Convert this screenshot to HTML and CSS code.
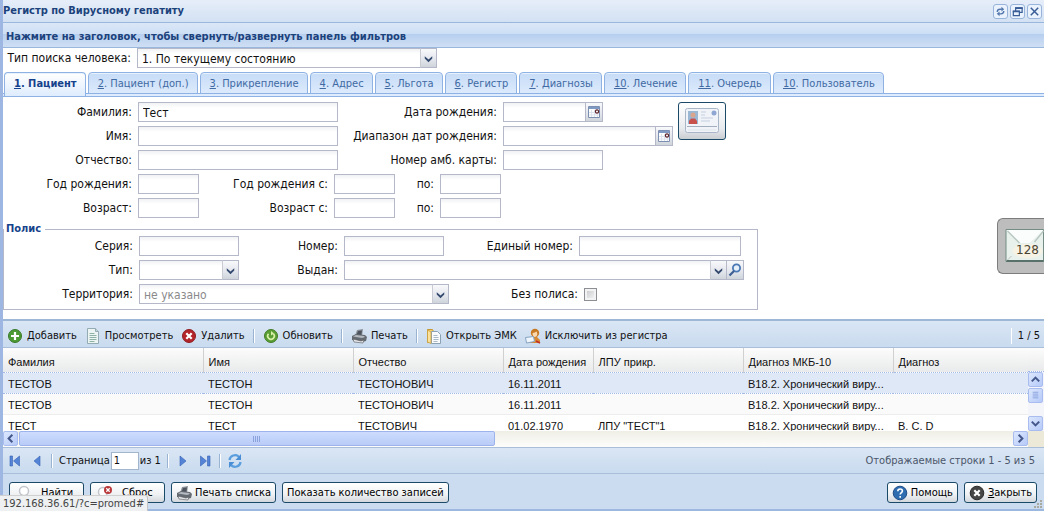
FILE: index.html
```html
<!DOCTYPE html>
<html lang="ru">
<head>
<meta charset="utf-8">
<title>Регистр по Вирусному гепатиту</title>
<link rel="stylesheet" href="styles.css">
</head>
<body>
<svg class="defs" aria-hidden="true">
  <symbol id="chevron" viewBox="0 0 16 18"><path d="M4 7l4 3.500 4-3.500v2.500l-4 4-4-4z" fill="#33496e"/></symbol>
  <symbol id="calendar" viewBox="0 0 16 18"><path d="M2.500 3.500h11v11h-11z" fill="#fff" stroke="#7d8fb0"/><path d="M3 4h10v2H3z" fill="#7f9ac4"/><path d="M5.500 7v7M8.500 7v7M11.500 11v3M3 9.500h6M3 12h10" stroke="#dde3ee"/><circle cx="11" cy="8.500" r="1.600" fill="#fff" stroke="#5a2028" stroke-width="1.200"/></symbol>
  <symbol id="printer" viewBox="0 0 16 16"><path d="M6 2l6-1-1 7H4z" fill="#8d939b"/><path d="M7 3l4-.5-.7 4.500H5.500z" fill="#4d545e"/><path d="M1 8l4-2 9 1 2 2-1 4-4 1-10-2z" fill="#656b73"/><path d="M2 8.500l3-1.500 8 1 1 1-3 1z" fill="#b5bac0"/><path d="M2 11l8 2 3-1-1 3-9-1z" fill="#e4e8ed" stroke="#555" stroke-width=".6"/></symbol>
</svg>
<div class="window">
  <header class="titlebar">
    <h1 class="title">Регистр по Вирусному гепатиту</h1>
    <div class="tools">
      <button class="tool" aria-label="Обновить окно"><svg viewBox="0 0 14 14"><path d="M3.500 7.500c0-2 1-3 3-3h2M10.500 6.500c0 2-1 3-3 3h-2" fill="none" stroke="#5377ac" stroke-width="1.500"/><path d="M8 2l3 2.500L8 7zM6 7L3 9.500 6 12z" fill="#5377ac"/></svg></button>
      <button class="tool" aria-label="Свернуть в окно"><svg viewBox="0 0 14 14"><path d="M5 6V3h7v5H9.500M2.500 6.700h6.500v4.800H2.500z" fill="none" stroke="#395d97" stroke-width="1.300"/><path d="M4.500 3.300h8M2 7h7.500" stroke="#395d97" stroke-width="1.800"/></svg></button>
      <button class="tool" aria-label="Закрыть окно"><svg viewBox="0 0 14 14"><path d="M3 3l8 8M11 3l-8 8" stroke="#395d97" stroke-width="1.600"/></svg></button>
    </div>
  </header>
  <h2 class="filter-head">Нажмите на заголовок, чтобы свернуть/развернуть панель фильтров</h2>

  <form class="filters">
    <div class="row search-type">
      <label for="stype">Тип поиска человека:</label>
      <span class="combo w300"><select id="stype"><option>1. По текущему состоянию</option></select><svg class="trigger"><use href="#chevron"/></svg></span>
    </div>
    <nav class="tabs">
      <a class="tab active" href="#p1"><u>1</u>. Пациент</a>
      <a class="tab" href="#p2"><u>2</u>. Пациент (доп.)</a>
      <a class="tab" href="#p3"><u>3</u>. Прикрепление</a>
      <a class="tab" href="#p4"><u>4</u>. Адрес</a>
      <a class="tab" href="#p5"><u>5</u>. Льгота</a>
      <a class="tab" href="#p6"><u>6</u>. Регистр</a>
      <a class="tab" href="#p7"><u>7</u>. Диагнозы</a>
      <a class="tab" href="#p8"><u>10</u>. Лечение</a>
      <a class="tab" href="#p9"><u>11</u>. Очередь</a>
      <a class="tab" href="#p10"><u>10</u>. Пользователь</a>
    </nav>
    <div class="patient" id="p1">
      <div class="rows">
        <div class="row"><label class="l1" for="fam">Фамилия:</label><input class="w200" id="fam" value="Тест"><label class="l2" for="bd">Дата рождения:</label><input class="w83" id="bd"><button type="button" class="trigger" aria-label="Календарь"><svg><use href="#calendar"/></svg></button></div>
        <div class="row"><label class="l1" for="im">Имя:</label><input class="w200" id="im"><label class="l2" for="bdr">Диапазон дат рождения:</label><input class="w153" id="bdr"><button type="button" class="trigger" aria-label="Календарь"><svg><use href="#calendar"/></svg></button></div>
        <div class="row"><label class="l1" for="ot">Отчество:</label><input class="w200" id="ot"><label class="l2" for="amb">Номер амб. карты:</label><input class="w100" id="amb"></div>
        <div class="row"><label class="l1" for="gr">Год рождения:</label><input class="w60" id="gr"><label class="l3" for="gr1">Год рождения с:</label><input class="w60" id="gr1"><label class="l4" for="gr2">по:</label><input class="w60" id="gr2"></div>
        <div class="row"><label class="l1" for="vo">Возраст:</label><input class="w60" id="vo"><label class="l3" for="vo1">Возраст с:</label><input class="w60" id="vo1"><label class="l4" for="vo2">по:</label><input class="w60" id="vo2"></div>
      </div>
      <button type="button" class="card-btn" aria-label="Считать карту"><svg viewBox="0 0 34 26"><rect x=".5" y=".5" width="33" height="24" rx="2" fill="#f0f4f9" stroke="#a9b6c8"/><rect x="3" y="3" width="10" height="13" fill="#9ab7d4"/><circle cx="8" cy="7" r="2.500" fill="#d9a58c"/><path d="M4 16v-3l2-2.500h4l2 2.500v3z" fill="#c9514c"/><path d="M16 4h5M16 7h4M16 10h12M16 13h9" stroke="#c6cfde"/><circle cx="29" cy="5" r="2.500" fill="#8fa6d2"/><path d="M2 18.500h30" stroke="#a3afbf"/><path d="M3 22h28" stroke="#dfe5ec"/></svg></button>
    </div>
    <fieldset class="policy">
      <legend>Полис</legend>
      <div class="row"><label class="l5" for="ser">Серия:</label><input class="w100" id="ser"><label class="l6" for="num">Номер:</label><input class="w100" id="num"><label class="l7" for="en">Единый номер:</label><input class="w162" id="en"></div>
      <div class="row"><label class="l5" for="tip">Тип:</label><span class="combo w100"><select id="tip"><option></option></select><svg class="trigger"><use href="#chevron"/></svg></span><label class="l6" for="vyd">Выдан:</label><span class="combo w383"><select id="vyd"><option></option></select><svg class="trigger"><use href="#chevron"/></svg></span><button type="button" class="trigger" aria-label="Найти"><svg viewBox="0 0 16 18"><circle cx="9.500" cy="7" r="3.600" fill="#e6f0fb" stroke="#4a78b4" stroke-width="1.800"/><path d="M7 10l-4.500 4.500" stroke="#3b5d92" stroke-width="2.200"/></svg></button></div>
      <div class="row"><label class="l5" for="ter">Территория:</label><span class="combo w310"><select class="muted" id="ter"><option>не указано</option></select><svg class="trigger"><use href="#chevron"/></svg></span><label class="l8" for="bez">Без полиса:</label><input type="checkbox" id="bez"></div>
    </fieldset>
  </form>

  <div class="toolbar">
    <button class="tb"><svg viewBox="0 0 16 16"><circle cx="8" cy="8" r="6.500" fill="#4c9a32" stroke="#3a7a2c"/><path d="M8 4v8M4 8h8" stroke="#fff" stroke-width="2.200"/></svg>Добавить</button>
    <button class="tb"><svg viewBox="0 0 16 16"><path d="M2.500 .5h8l3 3v12h-11z" fill="#edf5f4" stroke="#93abb3"/><path d="M10.500 .5v3h3" fill="#c6d6da" stroke="#93abb3"/><path d="M4.500 5.500h5M4.500 7.500h7M4.500 9.500h7M4.500 11.500h7M4.500 13.500h5" stroke="#8fb2a6"/></svg>Просмотреть</button>
    <button class="tb"><svg viewBox="0 0 16 16"><circle cx="8" cy="8" r="6.500" fill="#b3242a" stroke="#8e1e22"/><path d="M5.300 5.300l5.400 5.400M10.700 5.300l-5.400 5.400" stroke="#fff" stroke-width="2.200"/></svg>Удалить</button>
    <span class="sep"></span>
    <button class="tb"><svg viewBox="0 0 16 16"><circle cx="8" cy="8" r="6.500" fill="#5a9e34" stroke="#447c28"/><path d="M5.500 5.800a3.300 3.300 0 1 0 5 0" fill="none" stroke="#d9f0a8" stroke-width="1.600"/><path d="M8 3l3 2.500-3 2z" fill="#d9f0a8"/></svg>Обновить</button>
    <span class="sep"></span>
    <button class="tb"><svg><use href="#printer"/></svg>Печать</button>
    <span class="sep"></span>
    <button class="tb"><svg viewBox="0 0 16 16"><path d="M1.500 1.500h5l1 2v11h-6z" fill="#f3cf6a" stroke="#c59a36"/><path d="M5.500 3.500h6l3 3v9h-9z" fill="#f8fafb" stroke="#8aa2b4"/><path d="M7.500 7.500h4M7.500 9.500h5M7.500 11.500h5M7.500 13.500h4" stroke="#a8bac6"/><path d="M1.500 2l3.500 2v11.500l-3.500-1.500z" fill="#fbe19a" stroke="#c59a36" stroke-width=".7"/></svg>Открыть ЭМК</button>
    <button class="tb"><svg viewBox="0 0 16 16"><path d="M4 15l1-4 3-2h4l3 3v3z" fill="#d98a32"/><circle cx="10" cy="5" r="4.200" fill="#c77a23"/><path d="M7.500 5c2 0 3-.8 3.800-1.500.8.800 1 1.500 1 2.500 0 2-1.300 3-2.500 3s-2.300-1.500-2.300-4z" fill="#fbd9ae"/><path d="M.5 9.500l8-1 1 5-8 1.500z" fill="#eef5fb" stroke="#86a4c2"/><path d="M11 13l4 2" stroke="#c03028" stroke-width="1.500"/></svg>Исключить из регистра</button>
    <span class="counter">1 / 5</span>
  </div>

  <div class="grid">
    <table class="list">
      <colgroup><col class="c200"><col class="c150"><col class="c150"><col class="c90"><col class="c150"><col class="c150"><col></colgroup>
      <thead><tr><th>Фамилия</th><th>Имя</th><th>Отчество</th><th>Дата рождения</th><th>ЛПУ прикр.</th><th>Диагноз МКБ-10</th><th>Диагноз</th></tr></thead>
      <tbody>
        <tr class="selected"><td>ТЕСТОВ</td><td>ТЕСТОН</td><td>ТЕСТОНОВИЧ</td><td>16.11.2011</td><td></td><td>B18.2. Хронический виру...</td><td></td></tr>
        <tr class="alt"><td>ТЕСТОВ</td><td>ТЕСТОН</td><td>ТЕСТОНОВИЧ</td><td>16.11.2011</td><td></td><td>B18.2. Хронический виру...</td><td></td></tr>
        <tr><td>ТЕСТ</td><td>ТЕСТ</td><td>ТЕСТОВИЧ</td><td>01.02.1970</td><td>ЛПУ "ТЕСТ"1</td><td>B18.2. Хронический виру...</td><td>B. C. D</td></tr>
      </tbody>
    </table>
    <div class="head-end"></div>
    <div class="vscroll">
      <button class="sb" aria-label="Вверх"><svg viewBox="0 0 14 14"><path d="M3 9l4-4 4 4" fill="none" stroke="#43578a" stroke-width="2.200"/></svg></button>
      <span class="sb"><svg viewBox="0 0 14 14"><path d="M4 3.500h6M4 5.500h6M4 7.500h6M4 9.500h6" stroke="#8ba3dc"/></svg></span>
      <button class="sb last" aria-label="Вниз"><svg viewBox="0 0 14 14"><path d="M3 5l4 4 4-4" fill="none" stroke="#43578a" stroke-width="2.200"/></svg></button>
    </div>
    <div class="hscroll">
      <button class="sb" aria-label="Влево"><svg viewBox="0 0 14 14"><path d="M9 3L5 7l4 4" fill="none" stroke="#43578a" stroke-width="2.200"/></svg></button>
      <span class="thumb"><svg viewBox="0 0 8 8"><path d="M.5 1v6M2.500 1v6M4.500 1v6M6.500 1v6" stroke="#8ba3dc"/></svg></span>
      <button class="sb last" aria-label="Вправо"><svg viewBox="0 0 14 14"><path d="M5 3l4 4-4 4" fill="none" stroke="#43578a" stroke-width="2.200"/></svg></button>
    </div>
    <div class="corner"></div>
  </div>

  <div class="pager">
    <button class="pg" aria-label="Первая"><svg viewBox="0 0 16 16"><path d="M3 3h2.500v10H3zM12.500 3v10L6.500 8z" fill="#5584d6" stroke="#3562b4" stroke-width=".6"/></svg></button>
    <button class="pg" aria-label="Предыдущая"><svg viewBox="0 0 16 16"><path d="M11 3v10L5 8z" fill="#5584d6" stroke="#3562b4" stroke-width=".6"/></svg></button>
    <span class="sep"></span>
    <span class="page-box"><label for="page">Страница</label><input id="page" class="page" value="1"><span>из 1</span></span>
    <span class="sep"></span>
    <button class="pg" aria-label="Следующая"><svg viewBox="0 0 16 16"><path d="M5 3v10l6-5z" fill="#5584d6" stroke="#3562b4" stroke-width=".6"/></svg></button>
    <button class="pg" aria-label="Последняя"><svg viewBox="0 0 16 16"><path d="M3.500 3v10l6-5zM10.500 3H13v10h-2.500z" fill="#5584d6" stroke="#3562b4" stroke-width=".6"/></svg></button>
    <span class="sep"></span>
    <button class="pg" aria-label="Обновить"><svg viewBox="0 0 16 16"><path d="M2.500 7a5.500 5.500 0 0 1 9.500-3M13.500 9A5.500 5.500 0 0 1 4 12" fill="none" stroke="#5a9ede" stroke-width="2.300"/><path d="M14 1v6H8.500zM2 15V9h5.500z" fill="#4a8fd6"/></svg></button>
    <span class="info">Отображаемые строки 1 - 5 из 5</span>
  </div>

  <footer class="footer">
    <button class="btn w75"><svg viewBox="0 0 16 16"><circle cx="8" cy="6" r="4.500" fill="#fff" stroke="#c2c6cc" stroke-width="1.500"/></svg>Найти</button>
    <button class="btn w75"><svg viewBox="0 0 16 16"><circle cx="6" cy="7" r="4.500" fill="#fff" stroke="#c2c6cc" stroke-width="1.500"/><circle cx="11" cy="5" r="4" fill="#b9383a"/><path d="M9.300 3.300l3.400 3.400M12.700 3.300L9.300 6.700" stroke="#fff" stroke-width="1.300"/></svg>Сброс</button>
    <button class="btn"><svg><use href="#printer"/></svg>Печать списка</button>
    <button class="btn">Показать количество записей</button>
    <button class="btn right"><svg viewBox="0 0 16 16"><circle cx="8" cy="8" r="6.800" fill="#2f6db0" stroke="#1f4d88"/><path d="M5.800 6.300c0-3 4.600-3 4.600-.3 0 1.600-2.200 1.700-2.200 3.600M8.200 11v1.700" fill="none" stroke="#fff" stroke-width="1.600"/></svg>Помощь</button>
    <button class="btn"><svg viewBox="0 0 16 16"><circle cx="8" cy="8" r="6.800" fill="#454545" stroke="#2b2b2b"/><path d="M5.300 5.300l5.400 5.400M10.700 5.300l-5.400 5.400" stroke="#fff" stroke-width="2.200"/></svg><span><u>З</u>акрыть</span></button>
  </footer>
  <svg class="grip" viewBox="0 0 12 12" aria-hidden="true"><path d="M8 1h2v2H8zM5 4h2v2H5zM8 4h2v2H8zM2 7h2v2H2zM5 7h2v2H5zM8 7h2v2H8z" fill="#a9a9a0"/></svg>
</div>
<button class="mail" aria-label="Сообщения"><svg viewBox="0 0 38 34"><path d="M.5 .5H38v32H.5z" fill="#e9f1ed" stroke="#738c85"/><path d="M1 1l14 13h9L38 1z" fill="#fafdfb"/><path d="M2 2l12 12M38 2L29 13" fill="none" stroke="#b8c6c1" stroke-width="1.400"/><ellipse cx="22" cy="22" rx="15" ry="7" fill="#f6f3e4"/><path d="M2 31l4-4" stroke="#b8c6c1"/><path d="M1 32h37" stroke="#58726b" stroke-width="2"/></svg><span>128</span></button>
<div class="status">192.168.36.61/?c=promed#</div>
</body>
</html>
```
FILE: styles.css
```css
* { box-sizing: border-box; }
html, body { height: 100%; }
body {
  margin: 0;
  overflow: hidden;
  position: relative;
  font: 12px/16px "DejaVu Sans Condensed", "DejaVu Sans", sans-serif;
  color: #111;
}
button, input, select { font: inherit; color: inherit; margin: 0; padding: 0; border-radius: 0; }
button { background: none; border: 0; display: inline-flex; align-items: center; white-space: nowrap; }
.defs { display: none; }
label, .tab, th, .info { white-space: nowrap; }

.window {
  height: 100%;
  display: flex;
  flex-direction: column;
  background: #cbdcf1;
  border-left: 3px solid #9db6e2;
  border-bottom: 2px solid #9db8df;
}
.titlebar {
  display: flex;
  justify-content: space-between;
  align-items: center;
  height: 23px;
  padding: 0 2px 0 0;
  background: linear-gradient(#e6eef9, #d3e1f3);
  border-bottom: 1px solid #99b6dc;
}
.title, .filter-head { margin: 0; font-size: 11px; line-height: 16px; font-weight: bold; color: #1c427c; }
.tools { display: flex; gap: 2px; }
.tool { width: 15px; height: 15px; border: 1px solid #98b4da; border-radius: 3px; background: #e9f2fd; }
.tool svg { width: 13px; height: 13px; }
.filter-head {
  height: 25px;
  padding: 6px 3px 0;
  background: linear-gradient(#dbe7f7 0, #cddff5 45%, #b6cfef 46%, #cfdff3 100%);
  border-bottom: 1px solid #99b6dc;
}

.filters { background: #fff; padding-bottom: 9px; border-bottom: 2px solid #9db8d6; }
.row { display: flex; align-items: center; height: 20px; }
.search-type { padding-left: 3px; gap: 6px; margin-bottom: 4px; }
.search-type label { width: 125px; }
.row input:not([type="checkbox"]), select {
  height: 20px;
  border: 1px solid #b5b8c8;
  background: linear-gradient(#f1f2f4, #fff 5px);
  padding: 1px 4px 0;
  appearance: none;
}
select.muted { color: #8a8a8a; }
.combo { display: grid; }
.combo > * { grid-area: 1 / 1; }
.combo select { width: 100%; }
.trigger {
  width: 17px;
  height: 20px;
  border: 1px solid #b5b8c8;
  border-left-color: #c8cbd4;
  background: linear-gradient(#f8f9fb, #e2e5ec 60%, #cfd3da);
}
.combo .trigger { justify-self: end; pointer-events: none; }
.row button.trigger { border-left: 0; }
.trigger svg { width: 16px; height: 18px; }
.row label { text-align: right; }
.l1 { width: 129px; margin-right: 6px; }
.l2 { width: 159px; margin-right: 6px; }
.l3 { width: 129px; margin-right: 6px; }
.l4 { width: 39px; margin-right: 6px; }
.l5 { width: 129px; margin-right: 6px; }
.l6 { width: 99px; margin-right: 6px; }
.l7 { width: 129px; margin-right: 6px; }
.l8 { width: 129px; margin-right: 6px; }
.w60 { width: 61px; }
.w83 { width: 83px; }
.w100 { width: 100px; }
.w153 { width: 153px; }
.w162 { width: 162px; }
.w200 { width: 200px; }
.w300 { width: 300px; }
.w310 { width: 310px; }
.w383 { width: 383px; }
input[type="checkbox"] { appearance: none; width: 13px; height: 13px; border: 1px solid #8c8f94; background: linear-gradient(135deg, #c3c5c8, #fafafa); box-shadow: inset 0 0 0 2px #f3f3f3; }

.tabs { display: flex; gap: 2px; padding-left: 1px; height: 25px; align-items: flex-start; background: linear-gradient(#fff 21px, #8db2e3 21px 22px, #deecfd 22px 24px, #8db2e3 24px); }
.tab {
  height: 22px;
  padding: 3px 8px 0 9px;
  border: 1px solid #8db2e3;
  border-radius: 4px 4px 0 0;
  background: linear-gradient(#c7dcf7, #dceafc);
  box-shadow: inset 0 1px 0 #e8f2fd;
  color: #416aa3;
  font-size: 11px;
  text-decoration: none;
}
.tab.active { height: 24px; border-bottom: 0; background: linear-gradient(#fff, #deecfd); color: #15428b; font-weight: bold; }
.patient { display: flex; gap: 5px; padding-top: 5px; }
.rows { display: flex; flex-direction: column; gap: 4px; }
.card-btn { width: 48px; height: 38px; justify-content: center; border: 1px solid #1b4a68; border-radius: 3px; background: linear-gradient(#fff, #e8ebee 70%, #c9ced3); }
.card-btn svg { width: 34px; height: 26px; }
.policy { width: 755px; margin: 4px 0 0; padding: 0 0 5px; border: 1px solid #b5b8c8; display: grid; gap: 4px; }
.policy legend { padding: 0 4px 0 2px; font-size: 11px; line-height: 14px; font-weight: bold; color: #15428b; }

.toolbar, .pager {
  display: flex;
  align-items: center;
  height: 27px;
  font-size: 11px;
  background: linear-gradient(#dae6f4, #c9dbef);
  border-bottom: 1px solid #a9bfd9;
}
.toolbar { padding: 4px 4px 0; gap: 8px; }
.tb { gap: 4px; }
.tb svg, .btn svg { width: 16px; height: 16px; }
.sep { width: 2px; height: 14px; border-left: 1px solid #98b4d2; border-right: 1px solid #fff; }
.counter { margin-left: auto; padding-left: 6px; border-left: 1px solid #fff; }

.grid {
  flex: 1;
  min-height: 0;
  display: grid;
  grid-template-columns: minmax(0, 1fr) 16px;
  grid-template-rows: 24px minmax(0, 1fr) 16px;
  overflow: hidden;
  background: #fff;
  font: 11px/14px "Liberation Sans", Arial, sans-serif;
}
.list { grid-area: 1 / 1 / 3 / 2; width: 100%; border-collapse: collapse; table-layout: fixed; }
.c90 { width: 90px; }
.c150 { width: 150px; }
.c200 { width: 200px; }
.list th, .list td { padding: 2px 5px 0; text-align: left; font-weight: normal; overflow: hidden; white-space: nowrap; }
.list th { height: 24px; padding-top: 4px; border-right: 1px solid #d0d0d0; }
.list th:last-child { border-right: 0; }
.list thead, .head-end { background: linear-gradient(#fcfcfc, #e9eaeb); }
.list td { height: 21px; border-bottom: 1px solid #ededed; }
.list .alt { background: #fafafa; }
.list .selected { background: #dfe8f6; }
.list .selected td { border-top: 1px dotted #a3bae9; border-bottom: 1px dotted #a3bae9; }
.head-end { grid-area: 1 / 2; border-bottom: 1px dotted #a3bae9; }
.vscroll { grid-area: 2 / 2; display: flex; flex-direction: column; gap: 1px; background: #f4f5fa; }
.hscroll { grid-area: 3 / 1; display: flex; gap: 1px; background: linear-gradient(#efeee6, #fdfdfb); z-index: 1; }
.corner { grid-area: 3 / 2; background: #ece9d8; z-index: 1; }
.sb { width: 15px; height: 15px; border: 1px solid #a8bcf0; border-radius: 2px; background: linear-gradient(135deg, #dce7fe, #b6caf8); }
.sb svg { width: 13px; height: 13px; }
.vscroll .last { margin-top: auto; }
.hscroll .last { margin-left: auto; }
.thumb { width: 476px; height: 15px; display: flex; justify-content: center; align-items: center; border: 1px solid #9db3ec; border-radius: 2px; background: linear-gradient(#cddcfe, #b9cbf7); }
.thumb svg { width: 8px; height: 8px; }

.pager { padding: 0 9px 0 4px; gap: 6px; border-top: 1px solid #a9bfd9; }
.pg svg { width: 16px; height: 16px; }
.page-box { display: flex; align-items: center; gap: 1px; }
.page { width: 28px; height: 18px; padding: 0 2px; border: 1px solid #a3b5cc; background: #fff; }
.info { margin-left: auto; color: #4b566a; }

.footer { display: flex; align-items: center; gap: 6px; padding: 8px 7px 6px 6px; font-size: 11px; background: #cbdcf1; }
.btn { height: 21px; padding: 0 4px; gap: 3px; border: 1px solid #1b4a68; border-radius: 3px; background: linear-gradient(#fff, #eff1f3 60%, #d3d8dd); color: #000; }
.w75 { width: 75px; gap: 9px; padding-left: 6px; }
.right { margin-left: auto; }
.grip { position: absolute; right: 0; bottom: 0; width: 12px; height: 12px; }
.mail { position: absolute; right: 0; top: 218px; width: 47px; height: 56px; padding: 0 0 0 7px; border: 1px solid #7d7d7d; border-right: 0; border-radius: 6px 0 0 6px; background: #bdbdbd; display: grid; align-items: center; }
.mail > * { grid-area: 1 / 1; }
.mail svg { width: 39px; height: 34px; }
.mail span { padding: 8px 0 0 11px; font: 12px/16px "DejaVu Sans", sans-serif; color: #4c4433; text-align: left; }
.status { position: absolute; left: 0; bottom: 0; height: 16px; padding: 1px 3px 0; border-top: 1px solid #d0d0d0; border-right: 1px solid #c4c4c4; border-radius: 0 3px 0 0; background: #eef0f2; color: #444; font-size: 11px; line-height: 14px; }
```
